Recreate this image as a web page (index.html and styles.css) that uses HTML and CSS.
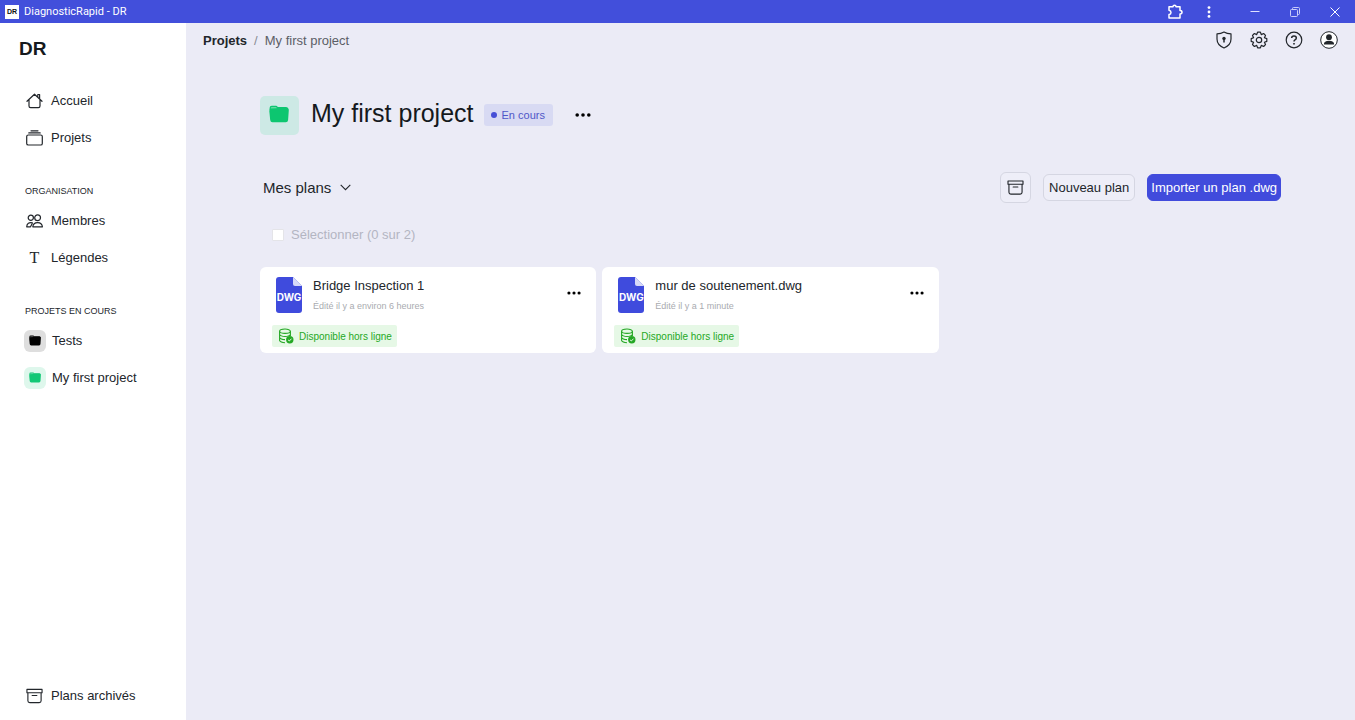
FILE: index.html
```html
<!DOCTYPE html>
<html lang="fr">
<head>
    <meta charset="UTF-8">
    <meta name="viewport" content="width=device-width, initial-scale=1.0">
    <title>DiagnosticRapid - DR</title>
    <link rel="stylesheet" href="styles.css">
</head>
<body>
    <svg class="sprite" aria-hidden="true">
        <symbol id="folder" viewBox="0 0 20 18">
            <path d="M0.6 5 V3 Q0.6 0.8 2.8 0.8 H7 Q8 0.8 8.8 2 H17 Q19.2 2 19.2 4 V5Z"/>
            <path d="M2 4 H8 L9.5 2.9 H17.8 Q20 2.9 19.8 5.2 L19.1 15 Q18.9 17.2 16.7 17.2 H3.5 Q1.4 17.2 1.2 15 L0.3 6 Q0.1 4 2 4Z"/>
            <path d="M1.8 3.6 V2.8 Q1.8 2 2.8 2 H7 L8 2.9 L7.4 3.3Z" fill="#fff" opacity="0.35"/>
        </symbol>
        <symbol id="archive" viewBox="0 0 18 16">
            <path d="M1 1 H17 V4.5 H1Z M2 4.5 V13 Q2 15 4 15 H14 Q16 15 16 13 V4.5 M6.5 7.5 H11.5" fill="none" stroke="currentColor" stroke-width="1.2" stroke-linejoin="round" stroke-linecap="round"/>
        </symbol>
        <symbol id="dots" viewBox="0 0 16 4">
            <circle cx="2.2" cy="2" r="1.8"/><circle cx="8" cy="2" r="1.8"/><circle cx="13.8" cy="2" r="1.8"/>
        </symbol>
        <symbol id="offline" viewBox="0 0 16 16">
            <g fill="none" stroke="currentColor" stroke-width="1.1">
                <ellipse cx="7" cy="3.2" rx="5.4" ry="2.2"/>
                <path d="M1.6 3.2 V12.5 Q2.5 14.6 7 14.7 M12.4 3.2 V8 M1.6 6.4 Q2.5 8.5 7 8.5 T12.4 6.4 M1.6 9.5 Q2.5 11.6 7 11.6"/>
            </g>
            <circle cx="11.8" cy="11.8" r="3.7" fill="currentColor"/>
            <path d="M10.1 11.9 L11.3 13 L13.5 10.7" fill="none" stroke="#e4f9e4"/>
        </symbol>
        <symbol id="file" viewBox="0 0 26 36">
            <path d="M3 0 H17 L26 9 V33 Q26 36 23 36 H3 Q0 36 0 33 V3 Q0 0 3 0Z" fill="#3f4bdd"/>
            <path d="M17 0 L26 9 H19 Q17 9 17 7Z" fill="#d6d9f8"/>
        </symbol>
    </svg>

    <header class="titlebar">
        <span class="app-icon">DR</span>
        <span class="app-title">DiagnosticRapid - DR</span>
        <div class="window-buttons">
            <button class="ext" aria-label="Extensions"><svg width="16" height="16" viewBox="0 0 16 16"><path d="M2 2.8 H6 Q6 1.2 7.5 1.2 T9 2.8 H13 V6.5 Q15 6.5 15 8.2 T13 10 V14 H2 V10.5 Q4 10.2 4 8.4 T2 6.3Z" fill="none" stroke="#fff" stroke-width="1.5" stroke-linejoin="round"/></svg></button>
            <button class="kebab" aria-label="Menu"><svg width="4" height="12" viewBox="0 0 4 12" fill="#fff"><circle cx="2" cy="1.6" r="1.4"/><circle cx="2" cy="6" r="1.4"/><circle cx="2" cy="10.4" r="1.4"/></svg></button>
            <button aria-label="Réduire"><svg width="10" height="10" viewBox="0 0 10 10"><path d="M0.5 4.5 H9.5" stroke="#dfe1ff"/></svg></button>
            <button aria-label="Restaurer"><svg width="10" height="10" viewBox="0 0 10 10" fill="none" stroke="#c9ccfa"><rect x="0.5" y="2.5" width="7" height="7" rx="1"/><path d="M2.5 2.5 V1.5 Q2.5 0.5 3.5 0.5 H8.5 Q9.5 0.5 9.5 1.5 V6.5 Q9.5 7.5 8.5 7.5 H7.5"/></svg></button>
            <button aria-label="Fermer"><svg width="10" height="10" viewBox="0 0 10 10"><path d="M0.5 0.5 L9.5 9.5 M9.5 0.5 L0.5 9.5" stroke="#fff"/></svg></button>
        </div>
    </header>

    <div class="layout">
        <aside class="sidebar">
            <div class="logo">DR</div>
            <nav class="menu">
                <a href="#"><svg width="17" height="16" viewBox="0 0 17 16" fill="none" stroke="currentColor" stroke-width="1.2" stroke-linejoin="round" stroke-linecap="round"><path d="M1 8.3 L8.5 1.2 L16 8.3 M3 6.8 V13 Q3 14.6 4.6 14.6 H12.4 Q14 14.6 14 13 V6.8 M11.8 3.8 V1.5 H13.6 V5.8"/></svg>Accueil</a>
                <a href="#"><svg width="17" height="16" viewBox="0 0 17 16" fill="none" stroke="currentColor" stroke-width="1.2" stroke-linecap="round"><rect x="0.7" y="5" width="15.6" height="10" rx="1.6"/><path d="M2.8 2.9 H14.2 M5 0.8 H12"/></svg>Projets</a>
            </nav>
            <h2>ORGANISATION</h2>
            <nav class="menu">
                <a href="#"><svg width="17" height="14" viewBox="0 0 17 14" fill="none" stroke="currentColor" stroke-width="1.2" stroke-linejoin="round"><circle cx="4.8" cy="3.8" r="2.6"/><circle cx="11.6" cy="3.8" r="2.9"/><path d="M6.8 12.8 Q7.2 8.6 11.6 8.6 T16.4 12.8Z M6.8 8.8 Q1 7.5 0.7 12.8 H4.5 L6.5 9"/></svg>Membres</a>
                <a href="#"><span class="letter">T</span>Légendes</a>
            </nav>
            <h2>PROJETS EN COURS</h2>
            <nav class="menu projects">
                <a href="#"><span class="tile dark"><svg width="12" height="11"><use href="#folder"/></svg></span>Tests</a>
                <a href="#"><span class="tile green"><svg width="12" height="11"><use href="#folder"/></svg></span>My first project</a>
            </nav>
            <nav class="menu bottom">
                <a href="#"><svg width="17" height="16"><use href="#archive"/></svg>Plans archivés</a>
            </nav>
        </aside>

        <main>
            <div class="topbar">
                <div class="breadcrumb"><a href="#">Projets</a><span class="slash">/</span><span>My first project</span></div>
                <div class="top-icons">
                    <button aria-label="Confidentialité"><svg width="18" height="18" viewBox="0 0 18 18"><path d="M9 1 Q12 2.8 16 2.8 V8 Q16 14 9 17 Q2 14 2 8 V2.8 Q6 2.8 9 1Z" fill="none" stroke="currentColor" stroke-width="1.2" stroke-linejoin="round"/><circle cx="9" cy="7.4" r="1.7" fill="currentColor"/><path d="M9 8 V11.5" stroke="currentColor" stroke-width="1.5"/></svg></button>
                    <button aria-label="Paramètres"><svg width="18" height="18" viewBox="0 0 18 18" fill="none" stroke="currentColor" stroke-width="1.2" stroke-linejoin="round"><path d="M6.7 3.6 L7.6 1.2 H10.4 L11.3 3.6 L13.6 2.5 L15.5 4.4 L14.4 6.7 L16.8 7.6 V10.4 L14.4 11.3 L15.5 13.6 L13.6 15.5 L11.3 14.4 L10.4 16.8 H7.6 L6.7 14.4 L4.4 15.5 L2.5 13.6 L3.6 11.3 L1.2 10.4 V7.6 L3.6 6.7 L2.5 4.4 L4.4 2.5Z"/><circle cx="9" cy="9" r="2.7"/></svg></button>
                    <button aria-label="Aide"><svg width="18" height="18" viewBox="0 0 18 18" fill="none" stroke="currentColor"><circle cx="9" cy="9" r="7.8" stroke-width="1.2"/><path d="M6.7 7 Q6.7 4.9 9 4.9 T11.3 6.9 Q11.3 8.1 10 8.8 Q9 9.4 9 10.6" stroke-width="1.5"/><circle cx="9" cy="12.8" r="0.5" fill="currentColor"/></svg></button>
                    <button aria-label="Compte"><svg width="18" height="18" viewBox="0 0 18 18"><circle cx="9" cy="9" r="8.3" fill="#fff" stroke="currentColor"/><circle cx="9" cy="6.2" r="2.9" fill="currentColor"/><path d="M3.8 13.4 Q4 9.8 9 9.8 T14.2 13.4Z" fill="currentColor"/></svg></button>
                </div>
            </div>

            <div class="content">
                <div class="project-head">
                    <span class="tile big"><svg width="20" height="18"><use href="#folder"/></svg></span>
                    <h1>My first project</h1>
                    <span class="status">En cours</span>
                    <button class="more" aria-label="Plus"><svg width="16" height="4"><use href="#dots"/></svg></button>
                </div>

                <div class="toolbar">
                    <button class="dropdown">Mes plans<svg width="11" height="7" viewBox="0 0 11 7"><path d="M0.7 0.8 L5.5 5.6 L10.3 0.8" fill="none" stroke="currentColor" stroke-width="1.1"/></svg></button>
                    <div class="actions">
                        <button class="btn square" aria-label="Archives"><svg width="17" height="15"><use href="#archive"/></svg></button>
                        <button class="btn">Nouveau plan</button>
                        <button class="btn primary">Importer un plan .dwg</button>
                    </div>
                </div>

                <label class="select-all"><input type="checkbox" disabled>Sélectionner (0 sur 2)</label>

                <div class="cards">
                    <article class="card">
                        <div class="card-head">
                            <span class="file"><svg width="26" height="36"><use href="#file"/></svg><b>DWG</b></span>
                            <div class="info">
                                <h3>Bridge Inspection 1</h3>
                                <p>Édité il y a environ 6 heures</p>
                            </div>
                            <button class="more" aria-label="Plus"><svg width="14" height="4"><use href="#dots"/></svg></button>
                        </div>
                        <span class="badge"><svg width="16" height="16"><use href="#offline"/></svg>Disponible hors ligne</span>
                    </article>
                    <article class="card">
                        <div class="card-head">
                            <span class="file"><svg width="26" height="36"><use href="#file"/></svg><b>DWG</b></span>
                            <div class="info">
                                <h3>mur de soutenement.dwg</h3>
                                <p>Édité il y a 1 minute</p>
                            </div>
                            <button class="more" aria-label="Plus"><svg width="14" height="4"><use href="#dots"/></svg></button>
                        </div>
                        <span class="badge"><svg width="16" height="16"><use href="#offline"/></svg>Disponible hors ligne</span>
                    </article>
                </div>
            </div>
        </main>
    </div>
</body>
</html>
```
FILE: styles.css
```css
* {
    box-sizing: border-box;
}
body {
    margin: 0;
    min-height: 100vh;
    display: flex;
    flex-direction: column;
    font-family: "Liberation Sans", Arial, sans-serif;
    font-size: 13px;
    color: #22262b;
    background: #ebebf6;
}
h1, h2, h3, p {
    margin: 0;
    font-weight: normal;
}
a {
    color: inherit;
    text-decoration: none;
}
button {
    font: inherit;
    color: inherit;
    background: none;
    border: none;
    padding: 0;
    cursor: pointer;
}
svg {
    display: block;
    flex: none;
}
.sprite {
    position: absolute;
    width: 0;
    height: 0;
}

/* window bar */
.titlebar {
    display: flex;
    align-items: center;
    height: 23px;
    padding-left: 5px;
    background: #424fdb;
    color: #fff;
}
.app-icon {
    width: 14px;
    height: 14px;
    background: #fff;
    color: #111;
    font-size: 7px;
    font-weight: bold;
    line-height: 14px;
    text-align: center;
}
.app-title {
    margin-left: 5px;
    font-family: Roboto, sans-serif;
    font-size: 11px;
}
.window-buttons {
    display: flex;
    margin-left: auto;
}
.window-buttons button {
    width: 40px;
    height: 23px;
    display: flex;
    align-items: center;
    justify-content: center;
}
.window-buttons .ext {
    width: 16px;
}
.window-buttons .kebab {
    width: 52px;
}

.layout {
    flex: 1;
    display: flex;
}

/* sidebar */
.sidebar {
    width: 186px;
    flex: none;
    display: flex;
    flex-direction: column;
    background: #fff;
}
.logo {
    padding: 15px 19px 0;
    font-size: 19px;
    font-weight: bold;
    line-height: 22px;
    color: #15191d;
}
.sidebar h2 {
    margin-top: 29px;
    padding-left: 25px;
    font-size: 9px;
    line-height: 12px;
}
.menu {
    display: flex;
    flex-direction: column;
    margin-top: 5px;
}
.logo + .menu {
    margin-top: 22px;
}
.menu a {
    display: flex;
    align-items: center;
    gap: 8px;
    height: 37px;
    padding-left: 26px;
}
.projects a {
    gap: 6px;
    padding-left: 24px;
}
.menu.bottom {
    margin-top: auto;
    margin-bottom: 6px;
}
.letter {
    width: 17px;
    font-family: "Liberation Serif", serif;
    font-size: 16px;
    text-align: center;
}
.tile {
    width: 22px;
    height: 22px;
    flex: none;
    display: flex;
    align-items: center;
    justify-content: center;
    border-radius: 6px;
}
.tile svg {
    fill: currentColor;
}
.tile.dark {
    color: #000;
    background: #dedede;
}
.tile.green {
    color: #13c876;
    background: #def7ec;
}
.tile.big {
    width: 39px;
    height: 39px;
    padding: 0 2px 3px 0;
    border-radius: 5px;
    color: #0dc670;
    background: #cde9e5;
}

/* main area */
main {
    flex: 1;
}
.topbar {
    display: flex;
    justify-content: space-between;
    align-items: center;
    height: 34px;
    padding: 0 17px;
}
.breadcrumb {
    display: flex;
    color: #5b5e66;
}
.breadcrumb a {
    font-weight: bold;
    color: #22262b;
}
.slash {
    margin: 0 7px;
    color: #888b94;
}
.top-icons {
    display: flex;
    gap: 17px;
}
.content {
    padding: 39px 74px;
}
.project-head {
    display: flex;
    align-items: center;
}
.project-head h1 {
    margin: 0 10px 6px 12px;
    font-size: 25px;
    line-height: 28px;
    color: #15191d;
}
.status {
    display: flex;
    align-items: center;
    gap: 5px;
    height: 22px;
    margin-bottom: 2px;
    padding: 0 8px 0 7px;
    border-radius: 3px;
    background: #d8daf3;
    color: #4f57c8;
    font-size: 11px;
}
.status::before {
    content: "";
    width: 6px;
    height: 6px;
    border-radius: 50%;
    background: #464fd6;
}
.project-head .more {
    margin: 0 0 2px 22px;
}
.toolbar {
    display: flex;
    justify-content: space-between;
    align-items: center;
    margin-top: 37px;
}
.dropdown {
    display: flex;
    align-items: center;
    gap: 9px;
    padding-left: 3px;
    font-size: 15px;
}
.actions {
    display: flex;
    align-items: center;
    gap: 12px;
}
.btn {
    display: flex;
    align-items: center;
    justify-content: center;
    height: 27px;
    padding: 0 5px;
    border: 1px solid #d5d6e2;
    border-radius: 6px;
    background: #eeeef8;
}
.btn.square {
    width: 31px;
    height: 31px;
}
.btn.primary {
    padding: 0 3px;
    border-color: #414bdc;
    background: #414bdc;
    color: #fff;
}
.select-all {
    display: flex;
    align-items: center;
    gap: 7px;
    margin: 24px 0 0 12px;
    color: #b3b5c2;
    line-height: 16px;
}
.select-all input {
    appearance: none;
    width: 12px;
    height: 12px;
    margin: 0;
    border: 1px solid #e4e4e8;
    border-radius: 1px;
    background: #fff;
}
.cards {
    display: grid;
    grid-template-columns: repeat(3, 1fr);
    gap: 6px;
    margin-top: 24px;
}
.card {
    padding: 10px 12px 6px;
    border-radius: 6px;
    background: #fff;
}
.card-head {
    display: flex;
    padding: 0 3px 0 4px;
}
.file {
    position: relative;
}
.file b {
    position: absolute;
    top: 14px;
    left: 0;
    width: 100%;
    color: #fff;
    font-family: Inter, sans-serif;
    font-size: 10px;
    line-height: 12px;
    text-align: center;
}
.info {
    flex: 1;
    margin-left: 11px;
}
.info h3 {
    font-size: 13px;
    line-height: 18px;
}
.info p {
    margin-top: 5px;
    color: #a9abb0;
    font-size: 9px;
    line-height: 12px;
}
.card .more {
    height: 32px;
}
.badge {
    display: inline-flex;
    align-items: center;
    gap: 5px;
    height: 22px;
    margin-top: 12px;
    padding: 0 5px 0 6px;
    border-radius: 2px;
    background: #e6f8e6;
    color: #25a825;
    font-size: 10px;
    vertical-align: top;
}
```
